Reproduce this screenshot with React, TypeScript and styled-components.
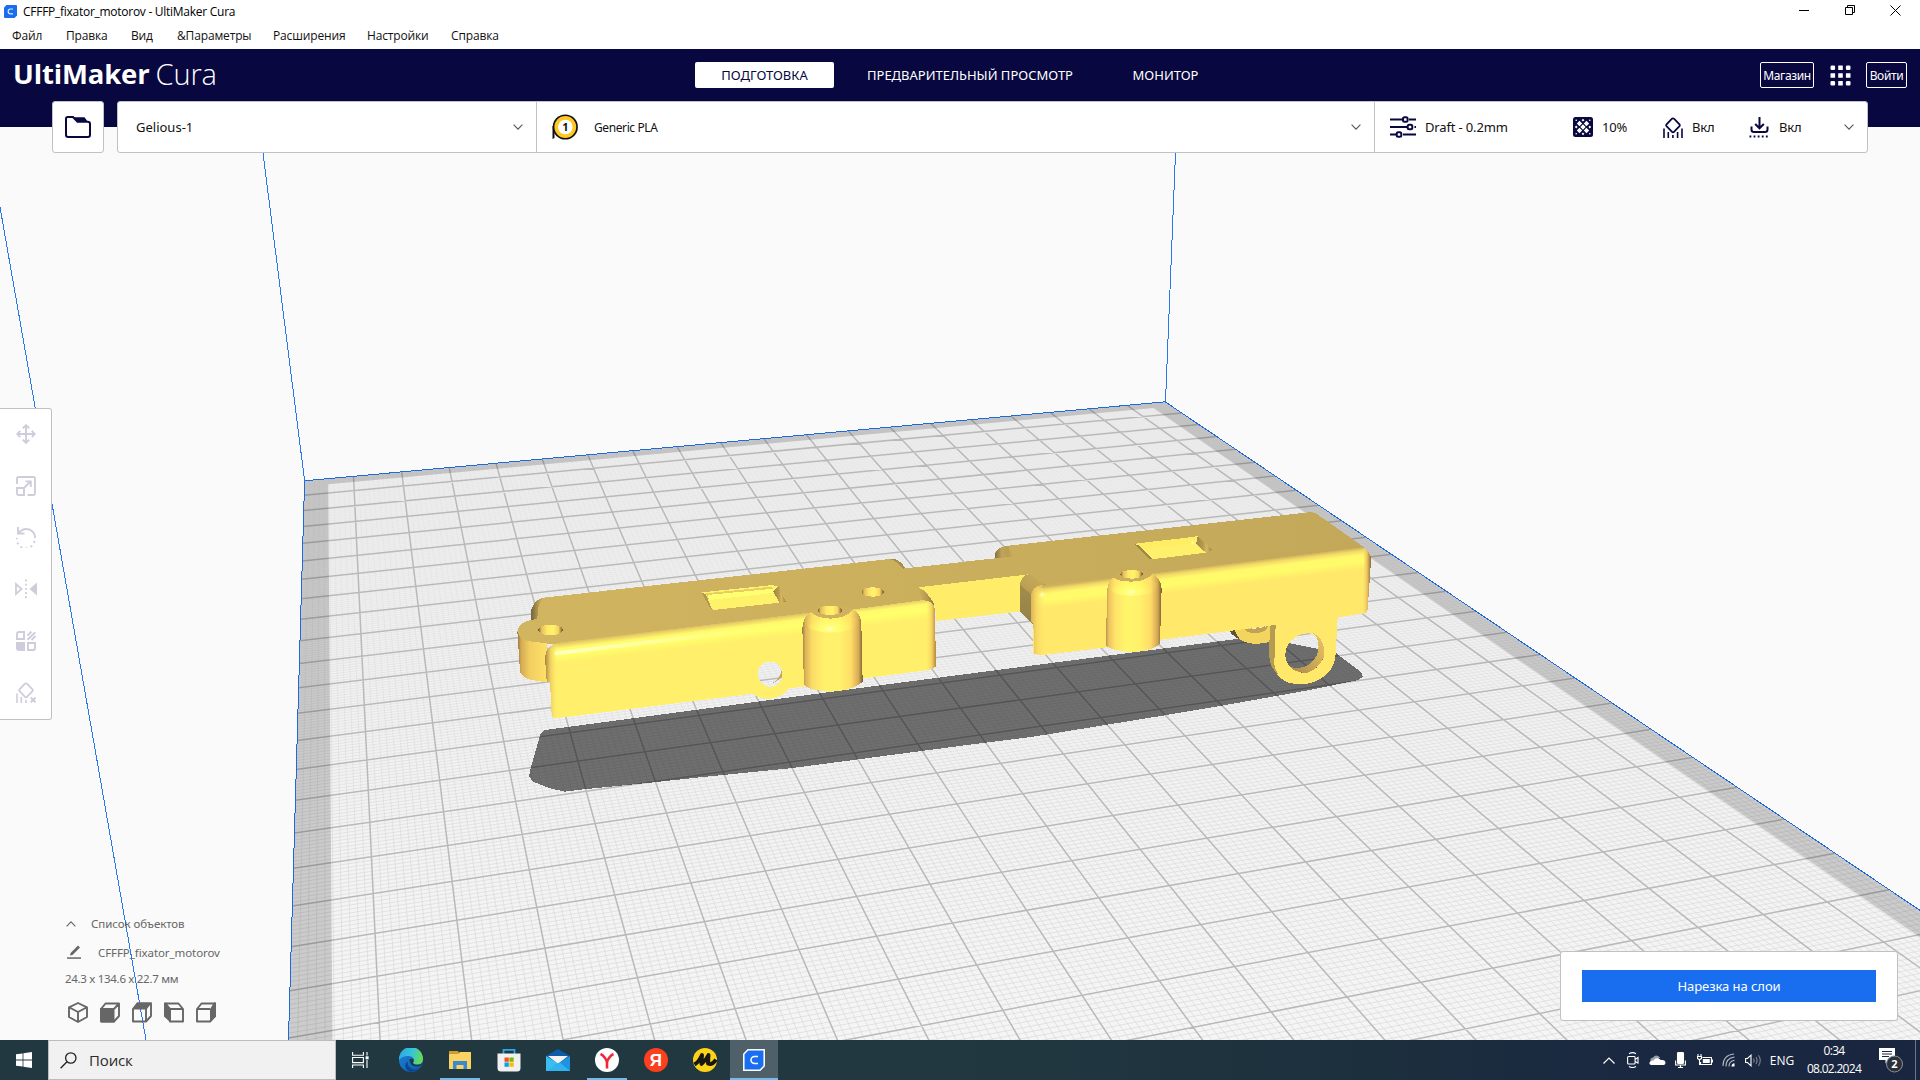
import React from "react";
import styled, { createGlobalStyle, css } from "styled-components";

const NAVY = "#08073f";
const BORDER = "#c0c1c2";
const DIM = "#cfcddb";
const GREY = "#666666";

const GlobalStyle = createGlobalStyle`
  * { box-sizing: border-box; }
  html, body { margin: 0; padding: 0; }
  body { width: 1920px; height: 1080px; overflow: hidden; background: #fafafa; font-family: "Noto Sans", "Open Sans", sans-serif; }
  svg { display: block; flex: none; }
`;

/* ---------- window frame ---------- */

const Window = styled.div`
  width: 1920px;
  height: 1080px;
  display: flex;
  flex-direction: column;
`;

const TitleBar = styled.div`
  height: 23px;
  flex: none;
  display: flex;
  align-items: center;
  background: #fff;
  padding-left: 4px;
  padding-right: 2px;
  gap: 6px;
`;

const TitleText = styled.div`
  font: 12px "Open Sans", "Noto Sans", sans-serif;
  letter-spacing: -0.27px;
  color: #000;
  flex: 1;
  white-space: nowrap;
`;

const WindowButtons = styled.div`
  display: flex;
  align-items: center;
  height: 20px;
  align-self: flex-start;
`;

const WindowButton = styled.div`
  width: 45.5px;
  display: flex;
  justify-content: center;
`;

const MenuBar = styled.div`
  height: 26px;
  flex: none;
  background: #fff;
  display: flex;
  align-items: center;
  padding: 0 0 1px 12px;
`;

const MenuItem = styled.div<{ $w: number }>`
  width: ${(p) => p.$w}px;
  font: 12px "Open Sans", "Noto Sans", sans-serif;
  letter-spacing: -0.15px;
  color: #111;
  white-space: nowrap;
`;

/* ---------- stage ---------- */

const Stage = styled.div`
  flex: 1;
  display: grid;
  grid-template: 991px / 1920px;
  overflow: hidden;
  > * { grid-area: 1 / 1; }
`;

const Overlay = styled.div`
  display: flex;
  flex-direction: column;
`;

const HeaderBand = styled.div`
  height: 78px;
  flex: none;
  background: ${NAVY};
`;

const HeaderRow = styled.div`
  height: 52px;
  display: grid;
  grid-template-columns: 695px 1fr auto;
  align-items: center;
  padding-right: 13px;
`;

const Logo = styled.div`
  padding-left: 13px;
  color: #fff;
  font: 700 27.5px/30px "Open Sans", sans-serif;
  letter-spacing: -0.15px;
  display: flex;
  gap: 6px;
  white-space: nowrap;
  padding-bottom: 2px;
`;

const LogoLight = styled.span`
  font-weight: 300;
  font-size: 29px;
  letter-spacing: -0.1px;
`;

const Tabs = styled.div`
  display: flex;
  align-items: center;
`;

const Tab = styled.div<{ $active?: boolean; $w: number }>`
  width: ${(p) => p.$w}px;
  height: 26px;
  border-radius: 2px;
  display: flex;
  align-items: center;
  justify-content: center;
  font-size: 13px;
  white-space: nowrap;
  color: ${(p) => (p.$active ? NAVY : "#fff")};
  background: ${(p) => (p.$active ? "#fff" : "transparent")};
`;

const HeaderActions = styled.div`
  display: flex;
  align-items: center;
  gap: 15.5px;
`;

const OutlineButton = styled.div<{ $w: number }>`
  width: ${(p) => p.$w}px;
  height: 26px;
  border: 1px solid #fff;
  border-radius: 2px;
  color: #fff;
  font-size: 12px;
  letter-spacing: -0.35px;
  display: flex;
  align-items: center;
  justify-content: center;
`;

const ConfigRow = styled.div`
  height: 52px;
  flex: none;
  margin-top: -26px;
  padding: 0 52px;
  display: flex;
  gap: 13px;
`;

const panel = css`
  background: #fff;
  border: 1px solid ${BORDER};
  border-radius: 3px;
`;

const FolderButton = styled.div`
  ${panel}
  width: 52px;
  display: flex;
  align-items: center;
  justify-content: center;
`;

const ConfigPanel = styled.div`
  ${panel}
  flex: 1;
  display: flex;
`;

const Section = styled.div<{ $w?: number }>`
  ${(p) => (p.$w ? `width: ${p.$w}px;` : "flex: 1;")}
  display: flex;
  align-items: center;
  padding: 0 13px 0 18px;
  font-size: 13px;
  color: #111;
  & + & { border-left: 1px solid ${BORDER}; }
`;

const MaterialSection = styled(Section)`
  padding-left: 15px;
  gap: 16px;
  font-size: 12px;
  letter-spacing: -0.4px;
`;

const SettingsSection = styled(Section)`
  padding-left: 15px;
`;

const Grow = styled.div`
  flex: 1;
`;

const Setting = styled.div<{ $w: number; $gap: number }>`
  width: ${(p) => p.$w}px;
  display: flex;
  align-items: center;
  gap: ${(p) => p.$gap}px;
  white-space: nowrap;
  letter-spacing: -0.15px;
`;

/* ---------- side tools ---------- */

const ToolPanel = styled.div`
  width: 52px;
  height: 312px;
  margin-top: 255px;
  flex: none;
  background: #fff;
  border: 1px solid ${BORDER};
  border-left: 0;
  border-radius: 0 3px 3px 0;
  display: flex;
  flex-direction: column;
`;

const Tool = styled.div`
  height: 51.8px;
  padding-bottom: 1.5px;
  display: flex;
  align-items: center;
  justify-content: center;
`;

const BottomRow = styled.div`
  flex: 1;
  display: flex;
  justify-content: space-between;
  align-items: flex-end;
  padding: 0 22px 19px 65px;
`;

const ObjectInfo = styled.div`
  display: flex;
  flex-direction: column;
  color: ${GREY};
  font-size: 11.5px;
  letter-spacing: -0.08px;
  margin-bottom: -12px;
`;

const InfoLine = styled.div<{ $h: number; $gap?: number; $indent?: number; $tight?: boolean }>`
  height: ${(p) => p.$h}px;
  display: flex;
  align-items: center;
  gap: ${(p) => p.$gap || 0}px;
  padding-left: ${(p) => p.$indent || 0}px;
  letter-spacing: ${(p) => (p.$tight ? "-0.3px" : "inherit")};
  white-space: nowrap;
`;

const ViewButtons = styled.div`
  height: 42px;
  display: flex;
  align-items: center;
  gap: 10px;
  padding-left: 2px;
`;

const SlicePanel = styled.div`
  ${panel}
  width: 338px;
  height: 70px;
  padding: 18px 21px;
`;

const SliceButton = styled.div`
  height: 32px;
  background: #196ef0;
  color: #fff;
  font-size: 13px;
  letter-spacing: -0.05px;
  display: flex;
  align-items: center;
  justify-content: center;
`;

/* ---------- taskbar ---------- */

const Taskbar = styled.div`
  height: 40px;
  flex: none;
  display: flex;
  background: linear-gradient(90deg, #213840 0%, #213840 50%, #1c2f3d 72%, #1a2841 85%, #1a2640 100%);
`;

const StartButton = styled.div`
  width: 48px;
  display: flex;
  align-items: center;
  justify-content: center;
`;

const SearchBox = styled.div`
  width: 288px;
  background: #f1f1f1;
  border: 1px solid #bdbdbd;
  display: flex;
  align-items: center;
  gap: 12px;
  padding-left: 11px;
  font: 15px "Open Sans", "Noto Sans", sans-serif;
  letter-spacing: -0.15px;
  color: #2b2b2b;
`;

const Apps = styled.div`
  display: flex;
  gap: 1px;
  flex: 1;
`;

const AppCell = styled.div<{ $active?: boolean; $line?: number }>`
  width: 48px;
  height: 40px;
  display: flex;
  align-items: center;
  justify-content: center;
  background: linear-gradient(#76b9ed, #76b9ed) center bottom / ${(p) => p.$line || 0}px 2px no-repeat,
    ${(p) => (p.$active ? "#4f6068" : "transparent")};
  &:first-child { margin-right: 2px; }
`;

const Tray = styled.div`
  display: flex;
  align-items: center;
  color: #fff;
  font: 12px "Open Sans", "Noto Sans", sans-serif;
`;

const TrayCell = styled.div<{ $w: number }>`
  width: ${(p) => p.$w}px;
  display: flex;
  justify-content: center;
`;

const Clock = styled.div`
  width: 70px;
  display: flex;
  flex-direction: column;
  align-items: center;
  line-height: 18px;
  letter-spacing: -0.7px;
`;

const ShowDesktop = styled.div`
  width: 5px;
  height: 40px;
  border-left: 1px solid #6c7686;
`;

/* ---------- build plate ---------- */

const A: [number, number] = [49.25, -4.52];
const C: [number, number] = [-0.411, 14.25];
const BU = 0.00723;
const DV = -0.02205;

function project(u: number, v: number): [number, number] {
  const w = 1 + BU * u + DV * v;
  return [304.6 + (A[0] * u + C[0] * v) / w, 480.8 + (A[1] * u + C[1] * v) / w];
}
const pt = (u: number, v: number) => project(u, v).map((n) => n.toFixed(2)).join(" ");
const seg = (u1: number, v1: number, u2: number, v2: number) => `M${pt(u1, v1)}L${pt(u2, v2)}`;

const U = 20;
const V = 33;

function gridPaths() {
  let major = "";
  let minor = "";
  for (let i = 1; i < U * 10; i++) {
    const d = seg(i / 10, 0, i / 10, V);
    if (i % 10) minor += d;
    else major += d;
  }
  for (let j = 1; j < V * 10; j++) {
    const d = seg(0, j / 10, U, j / 10);
    if (j % 10) minor += d;
    else major += d;
  }
  return { major, minor };
}

const Plate = () => {
  const { major, minor } = gridPaths();
  const s = 0.48;
  const t = 0.4;
  return (
    <g>
      <path d={`M${pt(0, 0)}L${pt(U, 0)}L${pt(U, V)}L${pt(0, V)}Z`} fill="url(#plate)" />
      <path d={minor} stroke="url(#minorLine)" strokeWidth=".6" />
      <path d={major} stroke="#b9b9b9" strokeWidth="1.5" />
      <path
        fillRule="evenodd"
        d={`M${pt(0, 0)}L${pt(U, 0)}L${pt(U, V)}L${pt(0, V)}ZM${pt(s, t)}L${pt(U - s, t)}L${pt(U - s, V)}L${pt(s, V)}Z`}
        fill="#000"
        fillOpacity=".165"
      />
      <g stroke="#2a78ee" strokeWidth="1" shapeRendering="crispEdges" fill="none">
        <path d={`M${pt(0, V)}L${pt(0, 0)}L${pt(U, 0)}L${pt(U, V)}`} stroke="#1f6adb" />
        <path d="M304.6 480.8L263 153M1165.5 402L1175.5 153M0 207L146 1040" />
      </g>
    </g>
  );
};

const Stops = ({ s }: { s: [number, string][] }) => (
  <>
    {s.map(([o, c]) => (
      <stop key={o} offset={o} stopColor={c} />
    ))}
  </>
);

const Model = () => (
  <g shapeRendering="crispEdges">
    <g transform="translate(500 540) scale(.333333)">
      {/* shadow on the plate */}
      <path
        d="M122 580L135 570L150 568L1200 428L2210 297L2270 290L2505 337L2585 398L2588 410L2575 420L2430 450L2160 498L1970 530L1600 590L1440 610L870 685L600 712L470 726L250 748L195 755L150 745L100 725L87 710L92 685Z"
        fill="#000"
        fillOpacity=".54"
      />
      {/* top surfaces */}
      <path
        d="M93 240L93 212Q102 178 130 173L1170 57Q1195 52 1217 85L1440 60L1486 55L1484 40Q1495 20 1525 17L2425-83Q2445-84 2455-75L2592 22L2592 30L1950 110L1840 125L1625 148L1585 105L1255 142L1280 182L1080 215L1000 250L920 226L175 314L80 306Q52 295 52 275Q55 248 93 240Z"
        fill="url(#top)"
      />
      <path d="M93 240L93 212Q102 178 130 173Q112 190 112 237Z" fill="url(#backEdge)" />
      <path d="M1170 57Q1195 52 1217 85L1208 86Q1190 62 1170 57Z" fill="#a68e4b" />
      {/* connecting bar */}
      <path d="M1255 142L1586 103L1564 214L1308 243L1306 200L1275 160Z" fill="#ffed6a" />
      {/* left ear */}
      <path d="M52 275Q58 300 100 306L140 309L145 427Q100 423 80 415Q62 405 60 395Z" fill="url(#ear)" />
      {/* left front wall */}
      <path
        fillRule="evenodd"
        d="M135 350Q140 315 175 308L920 219L1085 205L1270 180Q1307 178 1306 220L1307 380Q1295 390 1280 391L1090 415L910 440L868 445Q848 471 810 476Q775 476 757 461L200 531L168 534Q155 532 155 524L150 425L140 425ZM775 405A36 33 0 1 0 846 400A36 33 0 1 0 775 405Z"
        fill="url(#front)"
      />
      <path d="M135 350Q140 315 175 308L168 340L175 533L168 534Q155 532 155 524L150 425L140 425Z" fill="url(#leftEdge)" />
      <path d="M1283 183Q1307 190 1306 220L1307 380Q1295 390 1278 391L1278 230Z" fill="url(#rightEdge)" />
      <path d="M1255 142L1272 152Q1300 180 1306 204Q1298 180 1268 181Z" fill="url(#cornerBevel)" />
      <path d="M170 340L900 252" stroke="url(#shine)" strokeWidth="12" shapeRendering="auto" strokeLinecap="round" />
      <path d="M776 415Q806 450 845 410L846 390Q838 425 810 431Q790 433 776 415Z" fill="#c6a857" />
      {/* left boss */}
      <path d="M907 265Q910 215 955 208L1045 205Q1082 212 1084 250L1088 425Q1060 452 990 455Q930 452 912 435Z" fill="url(#boss1)" />
      <path d="M925 235Q950 218 990 232Q1040 222 1070 235Q1080 275 990 278Q900 275 925 235Z" fill="url(#bossGlow)" shapeRendering="auto" />
      <path d="M920 219Q950 195 990 197Q1040 197 1060 207Q1040 235 990 236Q950 234 932 216Z" fill="#cfb15e" />
      <ellipse cx="990" cy="211" rx="37" ry="14" fill="url(#holeFill)" />
      <ellipse cx="1118" cy="156" rx="34" ry="14" fill="url(#holeFill)" />
      <ellipse cx="152" cy="270" rx="37" ry="16" fill="url(#holeFill)" />
      {/* left pocket */}
      <path d="M605 157L810 136L835 137L840 188L640 210L628 200Z" fill="#fff26b" />
      <path d="M618 160L815 140L825 152L625 176Z" fill="#e8cd62" />
      <path d="M622 165L820 146L825 158L628 180Z" fill="#ffff72" />
      <path d="M605 157L618 163L636 208L628 200Z" fill="#b0984e" />
      <path d="M835 137L858 187L838 188L820 155Z" fill="url(#pocketWall)" />
    </g>

    <g transform="translate(900 490) scale(.333333)">
      <path d="M283 205L287 188Q296 168 325 168L340 200Z" fill="url(#corner)" />
      {/* rear hook */}
      <path d="M988 423L1110 400L1112 455Q1085 463 1060 461Q1020 458 988 423Z" fill="#f3d45f" />
      <path d="M988 423L1004 421Q1012 440 1022 450Q1000 440 988 423Z" fill="#5e5330" />
      <path d="M1033 419L1105 407Q1100 425 1070 430Q1045 430 1033 419Z" fill="#c0a254" />
      <path d="M1045 417L1100 409L1075 415Z" fill="#ededed" />
      {/* right block end */}
      <path d="M360 285Q362 258 388 252L435 283L400 310L398 402L360 363Z" fill="url(#blockEnd)" />
      <path d="M360 285Q362 258 388 252L435 283Q400 288 395 315Z" fill="url(#blockBevel)" />
      {/* right front wall with lug */}
      <path
        fillRule="evenodd"
        d="M392 320Q398 285 430 285L640 262L785 247L1385 172Q1414 180 1413 212L1403 360Q1400 370 1385 371L1313 382L1306 505Q1295 560 1230 580Q1190 584 1165 578Q1122 560 1121 520L1127 405L785 449L620 472L430 495L403 493Q400 492 400 485L400 400L392 395ZM1156 500Q1155 455 1200 434Q1240 422 1262 447Q1278 470 1270 505Q1255 540 1215 549Q1165 545 1156 500Z"
        fill="url(#front2)"
      />
      <path d="M1385 172Q1414 180 1413 212L1403 360Q1400 370 1385 371L1392 210Z" fill="url(#rightEdge2)" />
      <path d="M392 320Q395 290 425 285L430 300L438 495L403 493L400 400L392 395Z" fill="url(#leftEdge2)" />
      <circle cx="426" cy="315" r="12" fill="url(#spot)" shapeRendering="auto" />
      <path d="M1110 407L1127 404L1123 520Q1124 540 1137 556Q1110 535 1107 495Z" fill="#b69b52" />
      <path d="M1240 430Q1278 450 1272 500Q1250 545 1215 549Q1185 547 1170 530Q1200 540 1225 525Q1260 500 1255 460Q1252 440 1240 430Z" fill="url(#ringWall)" />
      {/* right boss */}
      <path d="M621 305Q622 268 650 258L750 247Q782 262 785 295L780 462Q755 483 700 486Q640 484 618 468Z" fill="url(#boss2)" />
      <path d="M635 280Q660 262 695 275Q740 262 770 278Q778 315 692 318Q615 315 635 280Z" fill="url(#bossGlow2)" shapeRendering="auto" />
      <path d="M632 264Q660 240 695 240Q735 240 758 250Q742 274 695 275Q650 274 640 262Z" fill="#cbae5c" />
      <ellipse cx="695" cy="253" rx="34" ry="13" fill="url(#holeFill)" />
      {/* right pocket */}
      <path d="M705 162L870 142L893 138L918 188L755 208L730 185Z" fill="#fff06b" />
      <path d="M712 160L870 142L893 138L890 158L725 178Z" fill="#ffee64" />
      <path d="M705 162L716 166L758 207L748 206Z" fill="#9c8646" />
      <path d="M893 138L938 180L918 188L888 162Z" fill="url(#pocketWall)" />
      <circle cx="878" cy="158" r="7" fill="url(#spot)" shapeRendering="auto" />
    </g>
  </g>
);

const Defs = () => (
  <defs>
    <linearGradient id="plate" gradientUnits="userSpaceOnUse" x1="0" y1="400" x2="0" y2="1040">
      <Stops s={[[0, "#ededed"], [0.3, "#f0f0f0"], [1, "#f5f5f5"]]} />
    </linearGradient>
    <linearGradient id="minorLine" gradientUnits="userSpaceOnUse" x1="0" y1="400" x2="0" y2="1040">
      <stop offset="0" stopColor="#d0d0d0" stopOpacity=".18" />
      <stop offset=".3" stopColor="#d0d0d0" stopOpacity=".4" />
      <stop offset=".7" stopColor="#d4d4d4" stopOpacity=".9" />
      <stop offset="1" stopColor="#d4d4d4" stopOpacity="1" />
    </linearGradient>
    <linearGradient id="top" gradientUnits="userSpaceOnUse" x1="50" y1="0" x2="2600" y2="0">
      <Stops s={[[0, "#d1b560"], [1, "#c3a85a"]]} />
    </linearGradient>
    <linearGradient id="backEdge">
      <Stops s={[[0, "#75643a"], [0.6, "#b59b52"], [1, "#ceb15e"]]} />
    </linearGradient>
    <linearGradient id="ear">
      <Stops s={[[0, "#8d7340"], [0.12, "#d4ab55"], [0.4, "#f2ce60"], [1, "#ffe268"]]} />
    </linearGradient>
    <linearGradient id="front" gradientUnits="userSpaceOnUse" x1="170" y1="306" x2="178" y2="372">
      <Stops s={[[0, "#d0b45f"], [0.12, "#e9cf64"], [0.32, "#fffb6c"], [0.6, "#ffff6a"], [0.85, "#fff46b"], [1, "#ffef6b"]]} />
    </linearGradient>
    <linearGradient id="front2" gradientUnits="userSpaceOnUse" x1="785" y1="246" x2="793" y2="311">
      <Stops s={[[0, "#cdb05d"], [0.15, "#f3d965"], [0.35, "#fff96c"], [0.65, "#fffb69"], [0.9, "#ffee6a"], [1, "#ffe86a"]]} />
    </linearGradient>
    <linearGradient id="leftEdge">
      <stop offset="0" stopColor="#a5823f" />
      <stop offset=".4" stopColor="#ecc45c" stopOpacity=".8" />
      <stop offset="1" stopColor="#ffef6b" stopOpacity="0" />
    </linearGradient>
    <linearGradient id="leftEdge2">
      <stop offset="0" stopColor="#d9b158" />
      <stop offset=".4" stopColor="#f6d463" stopOpacity=".8" />
      <stop offset="1" stopColor="#ffea6b" stopOpacity="0" />
    </linearGradient>
    <linearGradient id="rightEdge">
      <stop offset="0" stopColor="#ffe66b" stopOpacity="0" />
      <stop offset=".6" stopColor="#f5cf62" />
      <stop offset="1" stopColor="#b8903f" />
    </linearGradient>
    <linearGradient id="rightEdge2">
      <stop offset="0" stopColor="#ffe66b" stopOpacity="0" />
      <stop offset=".6" stopColor="#e9c05c" />
      <stop offset="1" stopColor="#8b6d36" />
    </linearGradient>
    <linearGradient id="cornerBevel">
      <Stops s={[[0, "#ccaf5d"], [0.5, "#b79b52"], [1, "#8a7340"]]} />
    </linearGradient>
    <linearGradient id="shine" gradientUnits="userSpaceOnUse" x1="170" y1="0" x2="900" y2="0">
      <stop offset="0" stopColor="#ffffc8" stopOpacity=".9" />
      <stop offset=".4" stopColor="#ffffb0" stopOpacity=".7" />
      <stop offset="1" stopColor="#ffff80" stopOpacity="0" />
    </linearGradient>
    <linearGradient id="boss1">
      <Stops s={[[0, "#9b7c41"], [0.05, "#dcb158"], [0.16, "#fbdc66"], [0.36, "#fff16b"], [0.62, "#fff16b"], [0.8, "#ffdf67"], [0.93, "#d9ab56"], [1, "#7c6236"]]} />
    </linearGradient>
    <linearGradient id="boss2">
      <Stops s={[[0, "#bb9249"], [0.05, "#edc35e"], [0.16, "#ffe269"], [0.36, "#fff66b"], [0.62, "#fff06b"], [0.8, "#ffdc67"], [0.93, "#d3a653"], [1, "#775f35"]]} />
    </linearGradient>
    <radialGradient id="bossGlow" gradientUnits="userSpaceOnUse" cx="990" cy="267" r="70" gradientTransform="translate(0 120) scale(1 .55)">
      <stop offset="0" stopColor="#ffffc8" />
      <stop offset=".25" stopColor="#ffff78" />
      <stop offset="1" stopColor="#ffff60" stopOpacity=".1" />
    </radialGradient>
    <radialGradient id="bossGlow2" gradientUnits="userSpaceOnUse" cx="692" cy="307" r="66" gradientTransform="translate(0 138) scale(1 .55)">
      <stop offset="0" stopColor="#ffffc8" />
      <stop offset=".25" stopColor="#ffff78" />
      <stop offset="1" stopColor="#ffff60" stopOpacity=".1" />
    </radialGradient>
    <radialGradient id="spot">
      <stop offset="0" stopColor="#ffffe0" />
      <stop offset="1" stopColor="#ffff60" stopOpacity="0" />
    </radialGradient>
    <linearGradient id="holeFill">
      <Stops s={[[0, "#66572f"], [0.12, "#e5bb5b"], [0.35, "#ffe869"], [0.6, "#fff46b"], [0.82, "#f6d162"], [0.92, "#a98645"], [1, "#5d4f2d"]]} />
    </linearGradient>
    <linearGradient id="corner">
      <Stops s={[[0, "#7f6d3d"], [0.4, "#c0a558"], [0.7, "#b89e54"], [1, "#c9ad5c"]]} />
    </linearGradient>
    <linearGradient id="blockEnd" x1="0" y1="0" x2="0" y2="1">
      <Stops s={[[0, "#a8904d"], [1, "#938148"]]} />
    </linearGradient>
    <linearGradient id="blockBevel" x1="0" y1="1" x2="1" y2="0">
      <Stops s={[[0, "#a8904d"], [0.35, "#bda255"], [1, "#cbae5c"]]} />
    </linearGradient>
    <linearGradient id="ringWall" x1="0" y1="1" x2="1" y2="0">
      <Stops s={[[0, "#a58a49"], [0.4, "#c7a454"], [1, "#efc65d"]]} />
    </linearGradient>
    <linearGradient id="pocketWall">
      <Stops s={[[0, "#a08746"], [0.4, "#b3984f"], [0.65, "#d8b85d"], [1, "#927c43"]]} />
    </linearGradient>
  </defs>
);

const Viewport = () => (
  <svg width="1920" height="991" viewBox="0 49 1920 991" fill="none">
    <Defs />
    <rect y="49" width="1920" height="991" fill="#fafafa" />
    <Plate />
    <Model />
  </svg>
);

/* ---------- icons ---------- */

const Chevron = ({ up, color = "#555" }: { up?: boolean; color?: string }) => (
  <svg width="10" height="6" viewBox="0 0 10 6" fill="none" stroke={color} strokeWidth="1.1">
    <path d={up ? "M.6 5.4L5 .8l4.4 4.6" : "M.6.6L5 5.2 9.4.6"} />
  </svg>
);

const AppIcon = () => (
  <svg width="13" height="13" viewBox="0 0 13 13">
    <path d="M2.5 0H12a1 1 0 0 1 1 1v9.500L10.500 13H1a1 1 0 0 1-1-1V2.500z" fill="#196ef0" />
    <path d="M9 4H6.600a2.400 2.400 0 0 0 0 4.800H9" fill="none" stroke="#dfe9ff" strokeWidth="1.200" />
  </svg>
);

const Waffle = () => (
  <svg width="21" height="21" viewBox="0 0 21 21" fill="#fff">
    {[0, 1, 2].map((r) =>
      [0, 1, 2].map((c) => (
        <rect key={`${r}${c}`} x={0.5 + c * 7.700} y={0.5 + r * 7.700} width="4.600" height="4.600" rx={r === 1 || c === 1 ? 0.3 : 1.300} />
      ))
    )}
  </svg>
);

const Folder = () => (
  <svg width="26" height="22" viewBox="0 0 26 22" fill="none" stroke={NAVY} strokeWidth="2">
    <path d="M1 19V2.800Q1 1 2.800 1H8l4.500 4.800H22.500Q25 5.800 25 8V18.800Q25 21 22.800 21H3.200Q1 21 1 19Z" />
    <path d="M9 1.200H19.500L23 6H13Z" fill={NAVY} stroke="none" />
  </svg>
);

const Spool = () => (
  <svg width="26" height="26" viewBox="0 0 26 26">
    <path d="M.5 25V12h2v12z" fill="#111" />
    <circle cx="13.300" cy="13" r="12.600" fill="#111" />
    <circle cx="13.300" cy="13" r="10.900" fill="#ffc924" />
    <circle cx="13.300" cy="13" r="7.300" fill="#fff" />
    <text x="13.300" y="17" fontSize="11" fontWeight="700" textAnchor="middle" fill="#111" fontFamily="Noto Sans, sans-serif">1</text>
  </svg>
);

const Sliders = () => (
  <svg width="26" height="22" viewBox="0 0 26 22" fill="none" stroke={NAVY} strokeWidth="2">
    <path d="M0 3.500h12M19 3.500h7M0 11h17M24.500 11H26M0 18.500h6M13 18.500h13" />
    <rect x="13" y="1.200" width="4.600" height="4.600" rx="1.500" />
    <rect x="17.700" y="8.700" width="4.600" height="4.600" rx="1.500" />
    <rect x="6.700" y="16.200" width="4.600" height="4.600" rx="1.500" />
  </svg>
);

const Infill = () => (
  <svg width="20" height="20" viewBox="0 0 20 20">
    <rect width="20" height="20" rx="2.500" fill={NAVY} />
    <g fill="#fff">
      {[[6.500, 6.500], [13.500, 6.500], [6.500, 13.500], [13.500, 13.500], [10, 10], [3.200, 10], [16.800, 10], [10, 3.200], [10, 16.800]].map(([x, y], i) => (
        <rect key={i} x={x - (i < 5 ? 1.900 : 1)} y={y - (i < 5 ? 1.900 : 1)} width={i < 5 ? 3.800 : 2} height={i < 5 ? 3.800 : 2} transform={`rotate(45 ${x} ${y})`} />
      ))}
      {[[3.200, 3.200], [16.800, 3.200], [3.200, 16.800], [16.800, 16.800]].map(([x, y]) => (
        <circle key={`${x}-${y}`} cx={x} cy={y} r=".8" />
      ))}
    </g>
  </svg>
);

const Support = ({ color = NAVY, blocked }: { color?: string; blocked?: boolean }) => (
  <svg width="20" height="21" viewBox="0 0 20 21" fill="none" stroke={color} strokeWidth="1.800">
    <path d="M10 1.300Q10.600 1.300 11.200 1.900L16.500 7.400Q17.300 8.300 16.500 9.200L11.200 14.700Q10 15.700 8.800 14.700L3.500 9.200Q2.700 8.300 3.500 7.400L8.800 1.900Q9.400 1.300 10 1.300Z" />
    <path d={blocked ? "M1 11.500V21M5.300 15V21M9.900 18V21" : "M1 11.500V21M5.300 15V21M9.900 18V21M14.600 15V21M19 11.500V21"} strokeWidth="1.600" />
    {blocked && <path d="M14.800 15.500l4.800 4.800M19.600 15.500l-4.800 4.800" strokeWidth="2" />}
  </svg>
);

const Adhesion = () => (
  <svg width="21" height="22" viewBox="0 0 21 22" fill="none" stroke={NAVY} strokeWidth="2">
    <path d="M10.500 1V12M6.200 8l4.300 4.300L14.800 8" />
    <path d="M2.500 10.500V13.500Q2.500 16 5 16H16Q18.500 16 18.500 13.500V10.500" />
    <path d="M.5 20.500H21" strokeDasharray="1.800 2.300" strokeWidth="1.800" />
  </svg>
);

const MoveIcon = () => (
  <svg width="20" height="20" viewBox="0 0 20 20" fill="none" stroke={DIM} strokeWidth="1.900">
    <path d="M10 1.500v17M1.500 10h17M6.800 4.200L10 1.200l3.200 3M6.800 15.800l3.200 3 3.200-3M4.200 6.800L1.200 10l3 3.200M15.800 6.800l3 3.200-3 3.200" />
  </svg>
);
const ScaleIcon = () => (
  <svg width="20" height="20" viewBox="0 0 20 20" fill="none" stroke={DIM} strokeWidth="1.900">
    <path d="M1 8V2.500Q1 1 2.500 1H17.500Q19 1 19 2.500V17.500Q19 19 17.500 19H11.500M1 12H8V19H2.500Q1 19 1 17.500ZM7.500 12.500L14.500 5.500M9.500 5.400H14.800V11" />
  </svg>
);
const RotateIcon = () => (
  <svg width="20" height="21" viewBox="0 0 20 21" fill="none" stroke={DIM} strokeWidth="1.900">
    <path d="M2 0V6.500H8.500M2.500 6Q6 2 10.500 2A8.600 8.600 0 0 1 19 11" />
    <path d="M18.500 14A8.700 8.700 0 0 1 1 11" strokeDasharray="2 3.300" />
  </svg>
);
const MirrorIcon = () => (
  <svg width="22" height="20" viewBox="0 0 22 20" fill="none" stroke={DIM} strokeWidth="1.800">
    <path d="M1 5V15L6.500 10Z" />
    <path d="M22 3.500V16.500L14.500 10Z" fill={DIM} stroke="none" />
    <path d="M11 .5V20" strokeDasharray="1.900 2.300" />
  </svg>
);
const PerModelIcon = () => (
  <svg width="20" height="20" viewBox="0 0 20 20" fill="none" stroke={DIM} strokeWidth="1.900">
    <path d="M1 8V3Q1 1 3 1H8V8ZM12 12H19V17Q19 19 17 19H12Z" />
    <path d="M0 11H9V20H3Q0 20 0 17Z" fill={DIM} stroke="none" />
    <path d="M11.500 4.500L15.500 .6M11.500 8.800L19.300 1.200M15.500 9L19.500 5" />
  </svg>
);

const Pencil = () => (
  <svg width="14" height="14" viewBox="0 0 14 14" fill={GREY}>
    <path d="M0 12.300h14v1.500H0z" />
    <path d="M3 10.500L3.600 8 11 .5 13 2.400 5.500 10z" />
  </svg>
);

const cubeFaces: Record<string, { frame: string; fill: string }> = {
  iso: { frame: "M10 1L19 5.300V15L10 20L1 15V5.300ZM1.500 5.500L10 10L18.500 5.500M10 10V19.500", fill: "" },
  front: { frame: "M1 7L5.500 1.500H19V14L14 19.500H1ZM14 7L18.500 2", fill: "M0 6H14.500V20.500H2Q0 20.500 0 18.500Z" },
  top: { frame: "M1 7L5.500 1.500H19V14L14 19.500H1ZM14 7V19.500", fill: "M0 7.500L5 .6H20L14.500 7.500Z" },
  left: { frame: "M6 7L1 1.500H14.500L19 7V19.500H6ZM6 7H19", fill: "M0 1Q0 .6 2 .6L6.500 7V20.500L0 14.500Z" },
  right: { frame: "M1 7L5.500 1.500H19V14L14 19.500H1ZM1 7H14", fill: "M14 7L18 .6H20V14.500L14 20.500Z" },
};

const Cube = ({ kind }: { kind: string }) => (
  <svg width="22" height="21" viewBox="-1 0 22 21" fill="none" stroke={GREY} strokeWidth="1.900" strokeLinejoin="round">
    <path d={cubeFaces[kind].frame} />
    {cubeFaces[kind].fill && <path d={cubeFaces[kind].fill} fill={GREY} stroke="none" />}
  </svg>
);

/* taskbar icons */

const WindowsLogo = () => (
  <svg width="16" height="16" viewBox="0 0 16 16" fill="#fff">
    <path d="M0 2.300L6.600 1.400V7.600H0zM7.400 1.300L16 0V7.600H7.400zM0 8.400H6.600V14.600L0 13.700zM7.400 8.400H16V16L7.400 14.700z" />
  </svg>
);
const SearchIcon = () => (
  <svg width="17" height="17" viewBox="0 0 17 17" fill="none" stroke="#222" strokeWidth="1.300">
    <circle cx="10.800" cy="6" r="5.200" />
    <path d="M7 9.800L.6 16.300" />
  </svg>
);
const TaskView = () => (
  <svg width="17" height="16" viewBox="0 0 17 16" fill="none" stroke="#fff" strokeWidth="1.100">
    <path d="M.6 0V3.200H11.400V0M.6 16V13H11.400V16M.6 5.500H11.400V10.600H.6ZM15 0V3.500M15 8V16" />
    <rect x="13.600" y="4.300" width="3" height="3" fill="#fff" stroke="none" />
  </svg>
);
const Edge = () => (
  <svg width="24" height="24" viewBox="0 0 24 24">
    <defs>
      <linearGradient id="edgeA" x1="0" y1=".3" x2="1" y2=".5">
        <Stops s={[[0, "#2fa8e0"], [0.5, "#35c3dd"], [1, "#67dc50"]]} />
      </linearGradient>
      <linearGradient id="edgeB" x1="0" y1="0" x2="1" y2="1">
        <Stops s={[[0, "#1c86d8"], [1, "#0f56a8"]]} />
      </linearGradient>
    </defs>
    <circle cx="12" cy="12" r="12" fill="url(#edgeB)" />
    <path d="M0 11A12 12 0 0 1 24 11Q24 16 19 16.500Q14 16.500 14 14.500Q15.500 13 15 11.500Q14 8 9 8Q3 8 0 12Z" fill="url(#edgeA)" />
    <path d="M8.500 13Q8 20 15 21.500Q19 22 22 19Q17 24.500 10 23.500Q3.500 19 8.500 13Z" fill="#0c4590" />
    <path d="M10.500 11.500Q12.500 10 14 11.200Q15.300 13 14 14.500Q14 17 19 16.800Q22 16.600 23.200 15Q22 18.500 18 18.600Q10.500 18 10.500 11.500Z" fill="#213840" />
  </svg>
);
const Explorer = () => (
  <svg width="22" height="18" viewBox="0 0 22 18">
    <path d="M0 0H9L10.500 2.500H0Z" fill="#d99a1c" />
    <path d="M0 2.500H9.500L11 1H22V18H0Z" fill="#fbd264" />
    <path d="M4 18V10H18V18H14.500V14H7.500V18Z" fill="#3b8ad0" />
  </svg>
);
const Store = () => (
  <svg width="24" height="24" viewBox="0 0 24 24">
    <path d="M6.500 6V1.800H17.500V6" fill="none" stroke="#29a8ea" strokeWidth="1.800" />
    <path d="M.5 5.500H23.500V20Q23.500 23.500 20 23.500H4Q.5 23.500 .5 20Z" fill="#f0f0f0" />
    <path d="M7.500 9.500h4.300v4.300H7.500z" fill="#f25022" />
    <path d="M12.400 9.500h4.300v4.300h-4.300z" fill="#7fba00" />
    <path d="M7.500 14.500h4.300v4.300H7.500z" fill="#00a4ef" />
    <path d="M12.400 14.500h4.300v4.300h-4.300z" fill="#ffb900" />
  </svg>
);
const Mail = () => (
  <svg width="24" height="22" viewBox="0 0 24 22">
    <path d="M0 7L12 0L24 7V22H0Z" fill="#0b5ca8" />
    <path d="M2 7H22L12 15Z" fill="#f2f2f2" />
    <path d="M0 7L24 22H0Z" fill="#39bdf2" />
    <path d="M24 7L8 17L24 22Z" fill="#1f93df" />
    <path d="M0 22L14 13.500L24 22Z" fill="#30b4ef" />
  </svg>
);
const YBrowser = () => (
  <svg width="24" height="24" viewBox="0 0 24 24">
    <circle cx="12" cy="12" r="12" fill="#fff" />
    <path d="M5.500 6Q8 7 10 10Q12 12.500 12 15V20.500M18.500 6Q16 7 14 10Q12 12.500 12 15" fill="none" stroke="#f0253a" strokeWidth="2.600" />
  </svg>
);
const Yandex = () => (
  <svg width="24" height="24" viewBox="0 0 24 24">
    <circle cx="12" cy="12" r="12" fill="#fc3f1d" />
    <text x="11.800" y="18" fontSize="17" fontWeight="700" textAnchor="middle" fill="#fff" fontFamily="Liberation Sans, sans-serif">Я</text>
  </svg>
);
const Market = () => (
  <svg width="24" height="24" viewBox="0 0 24 24">
    <circle cx="12" cy="12" r="12" fill="#fdd318" />
    <path d="M1.500 16.500Q6 14 9 7L8.500 16Q12.500 13 15.500 7L15 15.500Q19 17.500 23 11.500" fill="none" stroke="#161616" strokeWidth="3.900" strokeLinejoin="round" />
  </svg>
);
const CuraIcon = () => (
  <svg width="22" height="22" viewBox="0 0 22 22">
    <path d="M5 .8H21.200V17L17 21.200H.8V5Z" fill="#196ef0" stroke="#fff" strokeWidth="1.500" />
    <path d="M15 7.500H11.500a3.500 3.500 0 0 0 0 7H15" fill="none" stroke="#fff" strokeWidth="1.500" />
  </svg>
);

/* tray icons */

const Meet = () => (
  <svg width="12" height="16" viewBox="0 0 12 16" fill="none" stroke="#fff" strokeWidth="1.100">
    <rect x=".6" y="4.500" width="7.500" height="7.500" rx="1" />
    <path d="M8 7.500L11 5.500V11L8 9.500M2 1.800Q5.500-.5 9 1.800M2 14.500Q5.500 16.500 9 14.500" />
  </svg>
);
const Cloud = () => (
  <svg width="17" height="10" viewBox="0 0 17 10">
    <path d="M2 7Q0 3 4 2.500Q7-1.500 11 2.500L5 8Z" fill="#9aa0aa" />
    <path d="M2.500 10Q0 9.500 .5 7.500Q1.500 5 4.500 5.500Q6 2.500 9.500 3.500L12 5Q16.500 4.500 16.500 8Q16.300 10 14.500 10Z" fill="#fff" />
  </svg>
);
const Mic = () => (
  <svg width="11" height="16" viewBox="0 0 11 16" fill="none" stroke="#fff" strokeWidth="1.100">
    <rect x="2.500" y=".5" width="6" height="11" rx="1" fill="#fff" />
    <path d="M.6 8.500V13H10.400V8.500M5.500 13V15.500M3 15.500H8" />
  </svg>
);
const Battery = () => (
  <svg width="16" height="12" viewBox="0 0 16 12" fill="none" stroke="#fff" strokeWidth="1.100">
    <path d="M5.500 3.500H14.400V10.500H3.600V8M15.500 5.500V8.500M1 0V2M4 0V2M.5 2.500H4.500V4.500Q2.500 6.500 .5 4.500ZM2.500 6V11" />
    <rect x="5.800" y="5" width="7" height="4" fill="#fff" stroke="none" />
  </svg>
);
const Wifi = () => (
  <svg width="14" height="14" viewBox="0 0 14 14" fill="none" stroke="#b5bbc5" strokeWidth="1.100">
    <path d="M1 13Q1 2 12 1M4 13.500Q4 5 12.500 4M7 13.500Q7 8 12.500 7.200" />
    <path d="M9.500 13.500Q9.500 10.500 12.500 10.200V13.500Z" fill="#fff" stroke="none" />
  </svg>
);
const Volume = () => (
  <svg width="17" height="13" viewBox="0 0 17 13" fill="none" stroke="#fff" strokeWidth="1.100">
    <path d="M.6 4.500H2.500L6 1.200V11.800L2.500 8.500H.6Z" />
    <path d="M8.500 4.500Q9.800 6.500 8.500 8.500M11 3Q13.200 6.500 11 10M13.500 1.200Q17 6.500 13.500 12" stroke="#7d8696" />
  </svg>
);
const Notifications = () => (
  <svg width="26" height="26" viewBox="0 0 26 26">
    <path d="M0 1H16V13H10L6.500 16.500V13H0Z" fill="#fff" />
    <path d="M3 4.500H13M3 7H13M3 9.500H10" stroke="#1a2640" />
    <circle cx="15.500" cy="17" r="8" fill="#2c3038" stroke="#8b8f96" strokeWidth="1" />
    <text x="15.500" y="21" fontSize="11" fontWeight="700" textAnchor="middle" fill="#fff" fontFamily="Open Sans, sans-serif">2</text>
  </svg>
);

/* ---------- page ---------- */

const menu: [string, number][] = [
  ["Файл", 54],
  ["Правка", 65],
  ["Вид", 46],
  ["&Параметры", 96],
  ["Расширения", 94],
  ["Настройки", 84],
  ["Справка", 60],
];

const App = () => (
  <>
    <GlobalStyle />
    <Window>
      <TitleBar>
        <AppIcon />
        <TitleText>CFFFP_fixator_motorov - UltiMaker Cura</TitleText>
        <WindowButtons>
          <WindowButton>
            <svg width="10" height="10" stroke="#000"><path d="M0 5.500H10" /></svg>
          </WindowButton>
          <WindowButton>
            <svg width="10" height="10" stroke="#000" fill="none"><path d="M.5 2.500H7.500V9.500H.5ZM2.500 2.500V.5H9.500V7.500H7.500" /></svg>
          </WindowButton>
          <WindowButton>
            <svg width="11" height="11" stroke="#000"><path d="M.5.5L10.500 10.500M10.500.5L.5 10.500" /></svg>
          </WindowButton>
        </WindowButtons>
      </TitleBar>
      <MenuBar>
        {menu.map(([t, w]) => (
          <MenuItem key={t} $w={w}>{t}</MenuItem>
        ))}
      </MenuBar>

      <Stage>
        <Viewport />
        <Overlay>
          <HeaderBand>
            <HeaderRow>
              <Logo>
                UltiMaker <LogoLight>Cura</LogoLight>
              </Logo>
              <Tabs>
                <Tab $active $w={139}>ПОДГОТОВКА</Tab>
                <Tab $w={272}>ПРЕДВАРИТЕЛЬНЫЙ ПРОСМОТР</Tab>
                <Tab $w={119}>МОНИТОР</Tab>
              </Tabs>
              <HeaderActions>
                <OutlineButton $w={54}>Магазин</OutlineButton>
                <Waffle />
                <OutlineButton $w={41}>Войти</OutlineButton>
              </HeaderActions>
            </HeaderRow>
          </HeaderBand>

          <ConfigRow>
            <FolderButton>
              <Folder />
            </FolderButton>
            <ConfigPanel>
              <Section $w={418}>
                Gelious-1
                <Grow />
                <Chevron />
              </Section>
              <MaterialSection>
                <Spool />
                Generic PLA
                <Grow />
                <Chevron />
              </MaterialSection>
              <SettingsSection $w={493}>
                <Setting $w={183} $gap={9}><Sliders />Draft - 0.2mm</Setting>
                <Setting $w={90} $gap={9}><Infill />10%</Setting>
                <Setting $w={86} $gap={9}><Support />Вкл</Setting>
                <Setting $w={60} $gap={9}><Adhesion />Вкл</Setting>
                <Grow />
                <Chevron />
              </SettingsSection>
            </ConfigPanel>
          </ConfigRow>

          <ToolPanel>
            <Tool><MoveIcon /></Tool>
            <Tool><ScaleIcon /></Tool>
            <Tool><RotateIcon /></Tool>
            <Tool><MirrorIcon /></Tool>
            <Tool><PerModelIcon /></Tool>
            <Tool><Support color={DIM} blocked /></Tool>
          </ToolPanel>

          <BottomRow>
            <ObjectInfo>
              <InfoLine $h={29} $gap={15} $indent={1}><Chevron up color={GREY} />Список объектов</InfoLine>
              <InfoLine $h={28} $gap={17} $indent={2}><Pencil />CFFFP_fixator_motorov</InfoLine>
              <InfoLine $h={25} $tight>24.3 x 134.6 x 22.7 мм</InfoLine>
              <ViewButtons>
                {["iso", "front", "top", "left", "right"].map((k) => (
                  <Cube key={k} kind={k} />
                ))}
              </ViewButtons>
            </ObjectInfo>
            <SlicePanel>
              <SliceButton>Нарезка на слои</SliceButton>
            </SlicePanel>
          </BottomRow>
        </Overlay>
      </Stage>

      <Taskbar>
        <StartButton><WindowsLogo /></StartButton>
        <SearchBox><SearchIcon />Поиск</SearchBox>
        <Apps>
          <AppCell><TaskView /></AppCell>
          <AppCell><Edge /></AppCell>
          <AppCell $line={40}><Explorer /></AppCell>
          <AppCell><Store /></AppCell>
          <AppCell><Mail /></AppCell>
          <AppCell $line={40}><YBrowser /></AppCell>
          <AppCell><Yandex /></AppCell>
          <AppCell><Market /></AppCell>
          <AppCell $active $line={48}><CuraIcon /></AppCell>
        </Apps>
        <Tray>
          <TrayCell $w={24}>
            <svg width="12" height="7" fill="none" stroke="#fff" strokeWidth="1.200"><path d="M.5 6.500L6 1L11.500 6.500" /></svg>
          </TrayCell>
          <TrayCell $w={24}><Meet /></TrayCell>
          <TrayCell $w={24}><Cloud /></TrayCell>
          <TrayCell $w={23}><Mic /></TrayCell>
          <TrayCell $w={25}><Battery /></TrayCell>
          <TrayCell $w={24}><Wifi /></TrayCell>
          <TrayCell $w={24}><Volume /></TrayCell>
          <TrayCell $w={34}>ENG</TrayCell>
          <Clock>
            <div>0:34</div>
            <div>08.02.2024</div>
          </Clock>
          <TrayCell $w={46}><Notifications /></TrayCell>
          <ShowDesktop />
        </Tray>
      </Taskbar>
    </Window>
  </>
);

export default App;
